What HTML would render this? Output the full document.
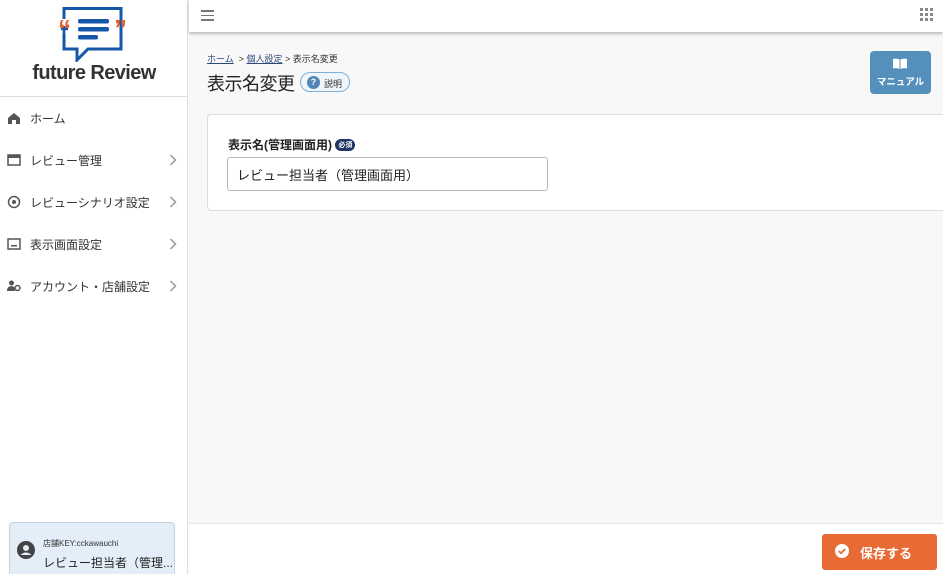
<!DOCTYPE html>
<html><head><meta charset="utf-8"><style>
*{box-sizing:border-box;margin:0;padding:0}
html,body{width:943px;height:574px;overflow:hidden}
body{font-family:"Liberation Sans","Noto Sans CJK JP",sans-serif;background:#f8f8f8;position:relative;color:#222}
.side{position:absolute;left:0;top:0;width:188px;height:574px;background:#fff;border-right:1px solid #e0e0e0}
.logo{height:97px;border-bottom:1px solid #ddd;position:relative}
.logo .t{position:absolute;left:0;width:188px;top:62px;text-align:center;font-size:20px;font-weight:bold;color:#333;letter-spacing:-0.6px}
.nav{position:absolute;left:0;width:188px;height:20px;font-size:12px;color:#333}
.nav .ic{position:absolute;left:7px;top:3px;width:14px;height:14px}
.nav .lb{position:absolute;left:30px;top:2px}
.nav .ch{position:absolute;left:169px;top:4px}
.top{position:absolute;left:189px;top:0;right:0;height:32px;background:#fff;box-shadow:0 2px 3px rgba(0,0,0,.25)}
.card{position:absolute;left:207px;top:114px;width:740px;height:97px;background:#fff;border:1px solid #ddd;border-radius:4px}
.bottom{position:absolute;left:189px;top:523px;right:0;height:51px;background:#fff;border-top:1px solid #e4e4e4}
</style></head><body>
<div class="side">
 <div class="logo">
  <svg width="188" height="62" style="position:absolute;left:0;top:0">
   <path d="M64 19 V8.5 H121 V49 H88 L77 60 V49 H64 V33" fill="none" stroke="#1757a8" stroke-width="3"/>
   <path d="M64 33 V26 M61 29 H68" stroke="#1757a8" stroke-width="2.5"/>
   <rect x="78" y="19" width="31" height="4.5" rx="2" fill="#1757a8"/>
   <rect x="78" y="27" width="31" height="4.5" rx="2" fill="#1757a8"/>
   <rect x="78" y="35" width="20" height="4.5" rx="2" fill="#1757a8"/>
   <text x="58" y="38" font-size="26" font-weight="bold" fill="#e8602a" font-family="Liberation Sans">“</text>
   <text x="114" y="38" font-size="26" font-weight="bold" fill="#e8602a" font-family="Liberation Sans">”</text>
  </svg>
  <div class="t">future Review</div>
 </div>
 <div class="nav" style="top:108px"><svg class="ic" viewBox="0 0 14 14"><path d="M1 7 L7 2 L13 7 V13 H9 V9 H5 V13 H1Z" fill="#555"/></svg><span class="lb">ホーム</span></div>
 <div class="nav" style="top:150px"><svg class="ic" viewBox="0 0 14 14"><rect x="1" y="2" width="12" height="10" fill="none" stroke="#555" stroke-width="1.5"/><rect x="1" y="2" width="12" height="3" fill="#555"/></svg><span class="lb">レビュー管理</span><svg class="ch" width="8" height="12"><path d="M1.5 1 L6.5 6 L1.5 11" fill="none" stroke="#999" stroke-width="1.5"/></svg></div>
 <div class="nav" style="top:192px"><svg class="ic" viewBox="0 0 14 14"><circle cx="7" cy="7" r="5.5" fill="none" stroke="#555" stroke-width="1.5"/><circle cx="7" cy="7" r="2" fill="#555"/></svg><span class="lb">レビューシナリオ設定</span><svg class="ch" width="8" height="12"><path d="M1.5 1 L6.5 6 L1.5 11" fill="none" stroke="#999" stroke-width="1.5"/></svg></div>
 <div class="nav" style="top:234px"><svg class="ic" viewBox="0 0 14 14"><rect x="1" y="2" width="12" height="10" fill="none" stroke="#555" stroke-width="1.5"/><rect x="4" y="8" width="6" height="1.5" fill="#555"/></svg><span class="lb">表示画面設定</span><svg class="ch" width="8" height="12"><path d="M1.5 1 L6.5 6 L1.5 11" fill="none" stroke="#999" stroke-width="1.5"/></svg></div>
 <div class="nav" style="top:276px"><svg class="ic" viewBox="0 0 14 14"><circle cx="4.5" cy="4" r="2.5" fill="#555"/><path d="M0 12 Q0 7 4.5 7 Q8 7 8 12Z" fill="#555"/><circle cx="10.5" cy="9" r="2.5" fill="none" stroke="#555" stroke-width="1.5"/></svg><span class="lb">アカウント・店舗設定</span><svg class="ch" width="8" height="12"><path d="M1.5 1 L6.5 6 L1.5 11" fill="none" stroke="#999" stroke-width="1.5"/></svg></div>
 <div style="position:absolute;left:9px;top:522px;width:166px;height:60px;background:#e3eef8;border:1px solid #c5d3df;border-radius:4px">
  <svg width="18" height="18" style="position:absolute;left:7px;top:18px" viewBox="0 0 18 18"><circle cx="9" cy="9" r="9" fill="#444"/><circle cx="9" cy="7" r="3" fill="#e3eef8"/><path d="M3.5 14 Q9 9 14.5 14" fill="#e3eef8"/></svg>
  <div style="position:absolute;left:33px;top:15px;font-size:8px;color:#333">店舗KEY:cckawauchi</div>
  <div style="position:absolute;left:33px;top:31px;font-size:12px;color:#222">レビュー担当者（管理...</div>
 </div>
</div>
<div class="top">
 <div style="position:absolute;left:12px;top:10px;width:13px">
  <div style="height:1.5px;background:#777;margin-bottom:3px"></div><div style="height:1.5px;background:#777;margin-bottom:3px"></div><div style="height:1.5px;background:#777"></div></div>
 <svg width="14" height="14" style="position:absolute;left:731px;top:8px"><g fill="#888"><rect x="0" y="0" width="3" height="3"/><rect x="5" y="0" width="3" height="3"/><rect x="10" y="0" width="3" height="3"/><rect x="0" y="5" width="3" height="3"/><rect x="5" y="5" width="3" height="3"/><rect x="10" y="5" width="3" height="3"/><rect x="0" y="10" width="3" height="3"/><rect x="5" y="10" width="3" height="3"/><rect x="10" y="10" width="3" height="3"/></g></svg>
</div>
<div style="position:absolute;left:207px;top:52px;font-size:9px;color:#333"><span style="color:#2b4a7a;text-decoration:underline">ホーム</span> &nbsp;&gt; <span style="color:#2b4a7a;text-decoration:underline">個人設定</span> &gt; 表示名変更</div>
<div style="position:absolute;left:207px;top:70px;font-size:18px;color:#222;letter-spacing:-0.5px">表示名変更</div>
<div style="position:absolute;left:300px;top:72px;width:50px;height:20px;border:1px solid #7fb0d6;border-radius:10px;background:#eef5fb;font-size:9px;color:#333">
 <span style="position:absolute;left:6px;top:3px;width:13px;height:13px;border-radius:50%;background:#4f86b5;color:#fff;font-size:9px;font-weight:bold;text-align:center;line-height:13px">?</span><span style="position:absolute;left:23px;top:4px">説明</span></div>
<div style="position:absolute;left:870px;top:51px;width:61px;height:43px;background:#5590bd;border-radius:4px;color:#fff;text-align:center">
 <svg width="14" height="11" style="position:absolute;left:23px;top:7px" viewBox="0 0 14 11"><path d="M0 1 Q3.5 0 6.5 1.5 V11 Q3.5 9.5 0 10.5Z M14 1 Q10.5 0 7.5 1.5 V11 Q10.5 9.5 14 10.5Z" fill="#fff"/></svg>
 <div style="position:absolute;left:0;right:0;top:23px;font-size:9.5px;font-weight:bold">マニュアル</div></div>
<div class="card">
 <div style="position:absolute;left:20px;top:21px;font-size:12px;font-weight:bold;color:#222">表示名(管理画面用) <span style="display:inline-block;background:#1f3566;color:#fff;font-size:7px;padding:1px 3px;border-radius:6px;vertical-align:2px">必須</span></div>
 <div style="position:absolute;left:19px;top:42px;width:321px;height:34px;border:1px solid #bbb;border-radius:3px;font-size:13px;padding:7px 9px;color:#222">レビュー担当者（管理画面用）</div>
</div>
<div class="bottom">
 <div style="position:absolute;left:633px;top:10px;width:115px;height:36px;background:#e86b35;border-radius:3px;color:#fff">
  <svg width="14" height="14" style="position:absolute;left:13px;top:10px" viewBox="0 0 14 14"><circle cx="7" cy="7" r="7" fill="#fff"/><path d="M3.8 7 L6 9.2 L10.2 5" fill="none" stroke="#e86b35" stroke-width="1.8"/></svg>
  <span style="position:absolute;left:38px;top:9px;font-size:13px;font-weight:bold">保存する</span></div>
</div>
</body></html>
